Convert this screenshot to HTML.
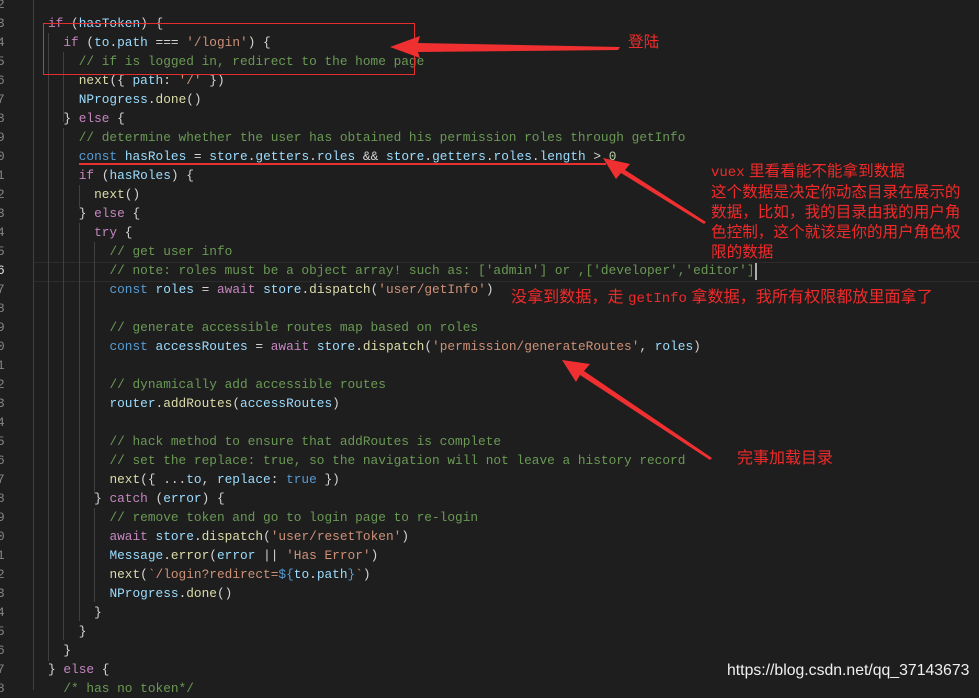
<!DOCTYPE html>
<html><head><meta charset="utf-8"><style>
body{margin:0;width:979px;height:690px;overflow:hidden;background:#1e1e1e;position:relative;font-family:"Liberation Mono",monospace}
.l{position:absolute;left:33px;height:19px;line-height:19px;font-size:12.8px;color:#d4d4d4;white-space:pre}
.n{position:absolute;left:-3px;height:19px;line-height:19px;font-size:12.8px;color:#858585;white-space:pre}
.k{color:#c586c0}.b{color:#569cd6}.v{color:#9cdcfe}.f{color:#dcdcaa}.s{color:#ce9178}.c{color:#6a9955}
.g{position:absolute;width:1px;background:#404040}
.r{position:absolute;color:#f02a2a;font-family:"Liberation Sans","Noto Sans CJK SC",sans-serif;font-size:15.6px;line-height:20px;white-space:nowrap}
.r code{font-family:"Liberation Mono",monospace;font-size:14px}
</style></head><body>
<div style="position:absolute;left:33px;top:262px;width:946px;height:18px;border-top:1px solid #2c2c2c;border-bottom:1px solid #2c2c2c"></div>
<div class="g" style="left:33px;top:0;height:690px"></div>
<div class="g" style="left:48px;top:33px;height:628px"></div>
<div class="g" style="left:63px;top:52px;height:70px"></div>
<div class="g" style="left:63px;top:128px;height:512px"></div>
<div class="g" style="left:79px;top:185px;height:22px"></div>
<div class="g" style="left:79px;top:223px;height:398px"></div>
<div class="g" style="left:94px;top:242px;height:252px"></div>
<div class="g" style="left:94px;top:508px;height:94px"></div>
<div id="code"></div>
<script>
var L=[
[1,''],
[2,''],
[3,'<span class="k">if</span> (<span class="v">hasToken</span>) {'],
[4,'  <span class="k">if</span> (<span class="v">to</span>.<span class="v">path</span> === <span class="s">\'/login\'</span>) {'],
[5,'    <span class="c">// if is logged in, redirect to the home page</span>'],
[6,'    <span class="f">next</span>({ <span class="v">path</span>: <span class="s">\'/\'</span> })'],
[7,'    <span class="v">NProgress</span>.<span class="f">done</span>()'],
[8,'  } <span class="k">else</span> {'],
[9,'    <span class="c">// determine whether the user has obtained his permission roles through getInfo</span>'],
[10,'    <span class="b">const</span> <span class="v">hasRoles</span> = <span class="v">store</span>.<span class="v">getters</span>.<span class="v">roles</span> &amp;&amp; <span class="v">store</span>.<span class="v">getters</span>.<span class="v">roles</span>.<span class="v">length</span> &gt; <span style="color:#b5cea8">0</span>'],
[11,'    <span class="k">if</span> (<span class="v">hasRoles</span>) {'],
[12,'      <span class="f">next</span>()'],
[13,'    } <span class="k">else</span> {'],
[14,'      <span class="k">try</span> {'],
[15,'        <span class="c">// get user info</span>'],
[16,'        <span class="c">// note: roles must be a object array! such as: [\'admin\'] or ,[\'developer\',\'editor\']</span>'],
[17,'        <span class="b">const</span> <span class="v">roles</span> = <span class="k">await</span> <span class="v">store</span>.<span class="f">dispatch</span>(<span class="s">\'user/getInfo\'</span>)'],
[18,''],
[19,'        <span class="c">// generate accessible routes map based on roles</span>'],
[20,'        <span class="b">const</span> <span class="v">accessRoutes</span> = <span class="k">await</span> <span class="v">store</span>.<span class="f">dispatch</span>(<span class="s">\'permission/generateRoutes\'</span>, <span class="v">roles</span>)'],
[21,''],
[22,'        <span class="c">// dynamically add accessible routes</span>'],
[23,'        <span class="v">router</span>.<span class="f">addRoutes</span>(<span class="v">accessRoutes</span>)'],
[24,''],
[25,'        <span class="c">// hack method to ensure that addRoutes is complete</span>'],
[26,'        <span class="c">// set the replace: true, so the navigation will not leave a history record</span>'],
[27,'        <span class="f">next</span>({ ...<span class="v">to</span>, <span class="v">replace</span>: <span class="b">true</span> })'],
[28,'      } <span class="k">catch</span> (<span class="v">error</span>) {'],
[29,'        <span class="c">// remove token and go to login page to re-login</span>'],
[30,'        <span class="k">await</span> <span class="v">store</span>.<span class="f">dispatch</span>(<span class="s">\'user/resetToken\'</span>)'],
[31,'        <span class="v">Message</span>.<span class="f">error</span>(<span class="v">error</span> || <span class="s">\'Has Error\'</span>)'],
[32,'        <span class="f">next</span>(<span class="s">`/login?redirect=</span><span class="b">${</span><span class="v">to</span>.<span class="v">path</span><span class="b">}</span><span class="s">`</span>)'],
[33,'        <span class="v">NProgress</span>.<span class="f">done</span>()'],
[34,'      }'],
[35,'    }'],
[36,'  }'],
[37,'} <span class="k">else</span> {'],
[38,'  <span class="c">/* has no token*/</span>']
];
var h='';
L.forEach(function(a){var t=14+(a[0]-3)*19;
h+='<div class="n" style="top:'+t+'px;'+(a[0]==16?'color:#e0e0e0':'')+'">'+(a[0]%10)+'</div>';
h+='<div class="l" style="left:48px;top:'+t+'px">'+a[1]+'</div>';});
document.getElementById('code').innerHTML=h;
</script>
<div style="position:absolute;left:755px;top:263px;width:2px;height:17px;background:#aeafad"></div>
<div style="position:absolute;left:43px;top:23px;width:370px;height:50px;border:1px solid #e23030"></div>
<div style="position:absolute;left:79px;top:163px;width:527px;height:2px;background:#e83030"></div>
<svg width="979" height="690" style="position:absolute;left:0;top:0">
<polygon points="390,47 420,36 418,43 620,47 618,50 418,52 420,58" fill="#f03030"/>
<polygon points="603,158 630,164 625,170 706,222 704,224 621,173 616,179" fill="#f03030"/>
<polygon points="562,360 590,364 584,371 712,458 710,460 580,375 576,382" fill="#f03030"/>
</svg>
<div class="r" style="left:628px;top:33px">登陆</div>
<div class="r" style="left:711px;top:162px"><code>vuex</code> 里看看能不能拿到数据<br>这个数据是决定你动态目录在展示的<br>数据，比如，我的目录由我的用户角<br>色控制，这个就该是你的用户角色权<br>限的数据</div>
<div class="r" style="left:511px;top:287px;font-size:16.1px">没拿到数据，走 <code>getInfo</code> 拿数据，我所有权限都放里面拿了</div>
<div class="r" style="left:737px;top:449px;font-size:16px">完事加载目录</div>
<div style="position:absolute;left:727px;top:660px;color:#f0f0f0;font-family:'Liberation Sans',sans-serif;font-size:15.8px;line-height:22px">https://blog.csdn.net/qq_37143673</div>
</body></html>
